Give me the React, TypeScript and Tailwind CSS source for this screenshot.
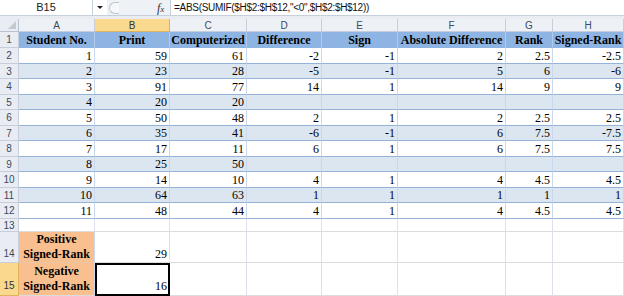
import React from "react";

const cols = ["A", "B", "C", "D", "E", "F", "G", "H"];
const headers = ["Student No.", "Print", "Computerized", "Difference", "Sign", "Absolute Difference", "Rank", "Signed-Rank"];
const data: (string | number)[][] = [
  [1, 59, 61, -2, -1, 2, 2.5, -2.5],
  [2, 23, 28, -5, -1, 5, 6, -6],
  [3, 91, 77, 14, 1, 14, 9, 9],
  [4, 20, 20, "", "", "", "", ""],
  [5, 50, 48, 2, 1, 2, 2.5, 2.5],
  [6, 35, 41, -6, -1, 6, 7.5, -7.5],
  [7, 17, 11, 6, 1, 6, 7.5, 7.5],
  [8, 25, 50, "", "", "", "", ""],
  [9, 14, 10, 4, 1, 4, 4.5, 4.5],
  [10, 64, 63, 1, 1, 1, 1, 1],
  [11, 48, 44, 4, 1, 4, 4.5, 4.5],
];

const rowH = (i: number) => (i % 2 === 0 ? "h-[16px]" : "h-[15px]");

export default function App() {
  return (
    <div className="w-[624px] h-[296px] overflow-hidden bg-white font-['Liberation_Serif',serif] text-black">
      {/* formula bar */}
      <div className="h-[16px] flex bg-[#eef1f6] border-b border-[#c7cfda] font-['Liberation_Sans',sans-serif] text-[11px]">
        <div className="w-[93px] bg-white border-r border-[#c7cfda] flex items-center justify-center text-[#222]">B15</div>
        <div className="w-[14px] bg-white flex items-center justify-center">
          <div className="w-0 h-0 border-l-[3px] border-r-[3px] border-t-[3px] border-l-transparent border-r-transparent border-t-[#222]" />
        </div>
        <div className="w-[63px] flex items-center">
          <div className="ml-[2px] w-[10px] h-[12px] rounded-l-full border border-r-0 border-[#c0c6cf] bg-[#f6f7f9]" />
          <div className="ml-[38px] font-['Liberation_Serif',serif] italic text-[12px] text-[#333]">f<span className="text-[9px]">x</span></div>
        </div>
        <div className="flex-1 bg-white border-l border-[#c7cfda] flex items-center pl-[3px] text-[10px] tracking-[-0.3px] text-[#111] whitespace-nowrap">
          =ABS(SUMIF($H$2:$H$12,"&lt;0",$H$2:$H$12))
        </div>
      </div>
      <div className="h-[3px] bg-[#e9edf3]" />
      <div className="grid grid-cols-[19px_76px_75px_77px_75px_76px_108px_47px_71px]">
        {/* column headers */}
        <div className="h-[13px] bg-[#e9edf3] border-r border-b border-[#b9c3cf] relative overflow-hidden">
          <svg className="absolute right-[2px] bottom-[2px]" width="8" height="8" viewBox="0 0 8 8">
            <polygon points="8,0 8,8 0,8" fill="#c3c9d1" />
          </svg>
        </div>
        {cols.map((c) => (
          <div
            key={c}
            className={`h-[13px] border-r border-b flex items-center justify-center font-['Liberation_Sans',sans-serif] text-[10px] ${
              c === "B" ? "bg-[#f9d98e] border-[#e0b35a] text-[#333]" : "bg-[#edf1f6] border-[#c5ceda] text-[#3c4a5c]"
            }`}
          >
            {c}
          </div>
        ))}
        {/* row 1 */}
        <div className="h-[16px] bg-[#e9edf3] border-r border-b border-[#c5ceda] flex items-center justify-center font-['Liberation_Sans',sans-serif] text-[10px] text-[#3c4a5c]">1</div>
        {headers.map((h) => (
          <div key={h} className="h-[16px] bg-[#8db4e2] border-r border-b border-r-[#b3cbe9] border-b-[#8db4e2] flex items-center justify-center font-bold text-[12px] whitespace-nowrap">
            {h}
          </div>
        ))}
        {/* data rows */}
        {data.map((row, i) => (
          <React.Fragment key={i}>
            <div className={`${rowH(i)} bg-[#e9edf3] border-r border-b border-[#c5ceda] flex items-center justify-center font-['Liberation_Sans',sans-serif] text-[10px] text-[#3c4a5c]`}>
              {i + 2}
            </div>
            {row.map((v, j) => (
              <div
                key={j}
                className={`${rowH(i)} ${i % 2 === 1 ? "bg-[#dce6f1]" : "bg-white"} border-r border-b border-r-[#c9d8ec] border-b-[#95b3d7] flex items-center justify-end pr-[2px] text-[12px]`}
              >
                {v}
              </div>
            ))}
          </React.Fragment>
        ))}
        {/* row 13 */}
        <div className="h-[13px] bg-[#e9edf3] border-r border-b border-[#c5ceda] flex items-center justify-center font-['Liberation_Sans',sans-serif] text-[10px] text-[#3c4a5c]">13</div>
        {cols.map((c) => (
          <div key={c} className="h-[13px] border-r border-b border-r-[#dde2ea] border-b-[#dcdcdc]" />
        ))}
        {/* row 14 */}
        <div className="h-[31px] bg-[#e9edf3] border-r border-b border-[#c5ceda] flex items-end justify-center pb-[1px] font-['Liberation_Sans',sans-serif] text-[10px] text-[#3c4a5c]">14</div>
        <div className="h-[31px] bg-[#fabf8f] border-r border-b border-r-[#c9d8ec] border-b-[#e8c6a8] flex flex-col items-center justify-center font-bold text-[12px] leading-[15px]">
          <span>Positive</span>
          <span>Signed-Rank</span>
        </div>
        <div className="h-[31px] border-r border-b border-r-[#dde2ea] border-b-[#dcdcdc] flex items-end justify-end pr-[2px] pb-[1px] text-[12px] leading-[14px]">29</div>
        {cols.slice(2).map((c) => (
          <div key={c} className="h-[31px] border-r border-b border-r-[#dde2ea] border-b-[#dcdcdc]" />
        ))}
        {/* row 15 */}
        <div className="h-[33px] bg-[#f9d98e] border-r border-b border-[#e0b35a] flex items-end justify-center pb-[2px] font-['Liberation_Sans',sans-serif] text-[10px] text-[#333]">15</div>
        <div className="h-[33px] bg-[#fabf8f] border-r border-b border-r-[#c9d8ec] border-b-[#dcdcdc] flex flex-col items-center justify-center font-bold text-[12px] leading-[15px]">
          <span>Negative</span>
          <span>Signed-Rank</span>
        </div>
        <div className="h-[33px] border-2 border-black flex items-end justify-end pr-[1px] pb-[1px] text-[12px] leading-[14px]">16</div>
        {cols.slice(2).map((c) => (
          <div key={c} className="h-[33px] border-r border-b border-r-[#dde2ea] border-b-[#dcdcdc]" />
        ))}
      </div>
    </div>
  );
}
